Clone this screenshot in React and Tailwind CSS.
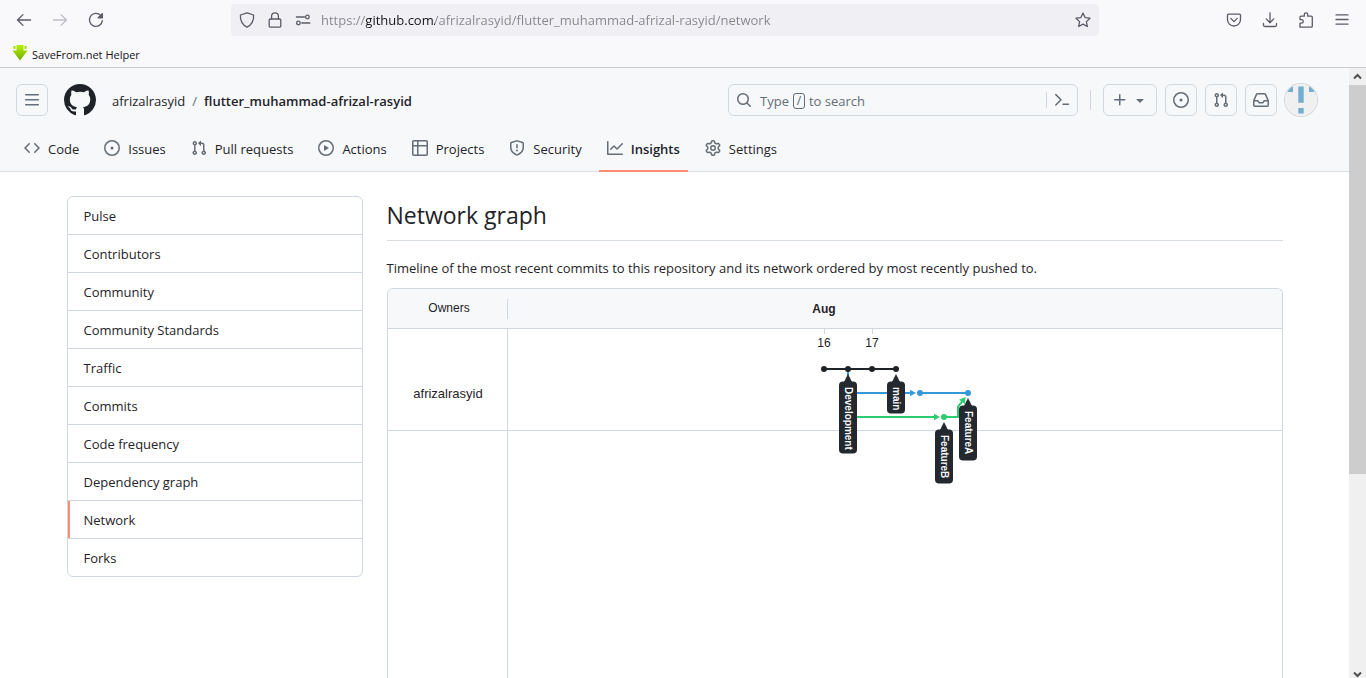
const ICONS = {
  code: "m11.28 3.22 4.25 4.25a.75.75 0 0 1 0 1.06l-4.25 4.25a.749.749 0 0 1-1.275-.326.749.749 0 0 1 .215-.734L13.94 8l-3.72-3.72a.749.749 0 0 1 .326-1.275.749.749 0 0 1 .734.215Zm-6.56 0a.751.751 0 0 1 1.042.018.751.751 0 0 1 .018 1.042L2.06 8l3.72 3.72a.749.749 0 0 1-.326 1.275.749.749 0 0 1-.734-.215L.47 8.53a.75.75 0 0 1 0-1.06Z",
  issue: "M8 9.5a1.5 1.5 0 1 0 0-3 1.5 1.5 0 0 0 0 3ZM8 0a8 8 0 1 1 0 16A8 8 0 0 1 8 0ZM1.5 8a6.5 6.5 0 1 0 13 0 6.5 6.5 0 0 0-13 0Z",
  pull: "M1.5 3.25a2.25 2.25 0 1 1 3 2.122v5.256a2.251 2.251 0 1 1-1.5 0V5.372A2.25 2.25 0 0 1 1.5 3.25Zm5.677-.177L9.573.677A.25.25 0 0 1 10 .854V2.5h1A2.5 2.5 0 0 1 13.5 5v5.628a2.251 2.251 0 1 1-1.5 0V5a1 1 0 0 0-1-1h-1v1.646a.25.25 0 0 1-.427.177L7.177 3.427a.25.25 0 0 1 0-.354ZM3.75 2.5a.75.75 0 1 0 0 1.5.75.75 0 0 0 0-1.5Zm0 9.5a.75.75 0 1 0 0 1.5.75.75 0 0 0 0-1.5Zm8.25.75a.75.75 0 1 0 1.5 0 .75.75 0 0 0-1.5 0Z",
  play: "M8 0a8 8 0 1 1 0 16A8 8 0 0 1 8 0ZM1.5 8a6.5 6.5 0 1 0 13 0 6.5 6.5 0 0 0-13 0Zm4.879-2.773 4.264 2.559a.25.25 0 0 1 0 .428l-4.264 2.559A.25.25 0 0 1 6 10.559V5.442a.25.25 0 0 1 .379-.215Z",
  table: "M0 1.75C0 .784.784 0 1.75 0h12.5C15.216 0 16 .784 16 1.75v12.5A1.75 1.75 0 0 1 14.25 16H1.75A1.75 1.75 0 0 1 0 14.25ZM6.5 6.5v8h7.75a.25.25 0 0 0 .25-.25V6.5Zm8-1.5V1.75a.25.25 0 0 0-.25-.25H6.5V5Zm-13 1.5v7.75c0 .138.112.25.25.25H5v-8ZM5 5V1.5H1.75a.25.25 0 0 0-.25.25V5Z",
  shield: "M7.467.133a1.748 1.748 0 0 1 1.066 0l5.25 1.68A1.75 1.75 0 0 1 15 3.48V7c0 1.566-.32 3.182-1.303 4.682-.983 1.498-2.585 2.813-5.032 3.855a1.697 1.697 0 0 1-1.33 0c-2.447-1.042-4.049-2.357-5.032-3.855C1.32 10.182 1 8.566 1 7V3.48a1.75 1.75 0 0 1 1.217-1.667Zm.61 1.429a.25.25 0 0 0-.153 0l-5.25 1.68a.25.25 0 0 0-.174.238V7c0 1.358.275 2.666 1.057 3.86.784 1.194 2.121 2.34 4.366 3.297a.196.196 0 0 0 .154 0c2.245-.956 3.582-2.104 4.366-3.298C13.225 9.666 13.5 8.36 13.5 7V3.48a.251.251 0 0 0-.174-.237l-5.25-1.68ZM8.75 4.75v3a.75.75 0 0 1-1.5 0v-3a.75.75 0 0 1 1.5 0ZM9 10.5a1 1 0 1 1-2 0 1 1 0 0 1 2 0Z",
  graph: "M1.5 1.75V13.5h13.75a.75.75 0 0 1 0 1.5H.75a.75.75 0 0 1-.75-.75V1.75a.75.75 0 0 1 1.5 0Zm14.28 2.53-5.25 5.25a.75.75 0 0 1-1.06 0L7 7.06 4.28 9.78a.751.751 0 0 1-1.042-.018.751.751 0 0 1-.018-1.042l3.25-3.25a.75.75 0 0 1 1.06 0L10 7.94l4.72-4.72a.751.751 0 0 1 1.042.018.751.751 0 0 1 .018 1.042Z",
  gear: "M8 0a8.2 8.2 0 0 1 .701.031C9.444.095 9.99.645 10.16 1.29l.288 1.107c.018.066.079.158.212.224.231.114.454.243.668.386.123.082.233.09.299.071l1.103-.303c.644-.176 1.392.021 1.82.63.27.385.506.792.704 1.218.315.675.111 1.422-.364 1.891l-.814.806c-.049.048-.098.147-.088.294.016.257.016.515 0 .772-.01.147.038.246.088.294l.814.806c.475.469.679 1.216.364 1.891a7.977 7.977 0 0 1-.704 1.217c-.428.61-1.176.807-1.82.63l-1.102-.302c-.067-.019-.177-.011-.3.071a5.909 5.909 0 0 1-.668.386c-.133.066-.194.158-.211.224l-.29 1.106c-.168.646-.715 1.196-1.458 1.26a8.006 8.006 0 0 1-1.402 0c-.743-.064-1.289-.614-1.458-1.26l-.289-1.106c-.018-.066-.079-.158-.212-.224a5.738 5.738 0 0 1-.668-.386c-.123-.082-.233-.09-.299-.071l-1.103.303c-.644.176-1.392-.021-1.82-.63a8.12 8.12 0 0 1-.704-1.218c-.315-.675-.111-1.422.363-1.891l.815-.806c.05-.048.098-.147.088-.294a6.214 6.214 0 0 1 0-.772c.01-.147-.038-.246-.088-.294l-.815-.806C.635 6.045.431 5.298.746 4.623a7.92 7.92 0 0 1 .704-1.217c.428-.61 1.176-.807 1.82-.63l1.102.302c.067.019.177.011.3-.071.214-.143.437-.272.668-.386.133-.066.194-.158.211-.224l.29-1.106C6.009.645 6.556.095 7.299.03 7.53.01 7.764 0 8 0Zm-.571 1.525c-.036.003-.108.036-.137.146l-.289 1.105c-.147.561-.549.967-.998 1.189-.173.086-.34.183-.5.29-.417.278-.97.423-1.529.27l-1.103-.303c-.109-.03-.175.016-.195.045-.22.312-.412.644-.573.99-.014.031-.021.11.059.19l.815.806c.411.406.562.957.53 1.456a4.709 4.709 0 0 0 0 .582c.032.499-.119 1.05-.53 1.456l-.815.806c-.081.08-.073.159-.059.19.162.346.353.677.573.989.02.03.085.076.195.046l1.102-.303c.56-.153 1.113-.008 1.53.27.161.107.328.204.501.29.447.222.85.629.997 1.189l.289 1.105c.029.109.101.143.137.146a6.6 6.6 0 0 0 1.142 0c.036-.003.108-.036.137-.146l.289-1.105c.147-.561.549-.967.998-1.189.173-.086.34-.183.5-.29.417-.278.97-.423 1.529-.27l1.103.303c.109.029.175-.016.195-.045.22-.313.411-.644.573-.99.014-.031.021-.11-.059-.19l-.815-.806c-.411-.406-.562-.957-.53-1.456a4.709 4.709 0 0 0 0-.582c-.032-.499.119-1.05.53-1.456l.815-.806c.081-.08.073-.159.059-.19a6.464 6.464 0 0 0-.573-.989c-.02-.03-.085-.076-.195-.046l-1.102.303c-.56.153-1.113.008-1.53-.27a4.44 4.44 0 0 0-.501-.29c-.447-.222-.85-.629-.997-1.189l-.289-1.105c-.029-.11-.101-.143-.137-.146a6.6 6.6 0 0 0-1.142 0ZM11 8a3 3 0 1 1-6 0 3 3 0 0 1 6 0ZM9.5 8a1.5 1.5 0 1 0-3.001.001A1.5 1.5 0 0 0 9.5 8Z",
  inbox: "M2.8 2.06A1.75 1.75 0 0 1 4.41 1h7.18c.7 0 1.333.417 1.61 1.06l2.74 6.395c.04.093.06.194.06.295v4.5A1.75 1.75 0 0 1 14.25 15H1.75A1.75 1.75 0 0 1 0 13.25v-4.5c0-.101.02-.202.06-.295Zm1.61.44a.25.25 0 0 0-.23.152L1.887 8H4.75a.75.75 0 0 1 .6.3L6.625 10h2.75l1.275-1.7a.75.75 0 0 1 .6-.3h2.863L11.82 2.652a.25.25 0 0 0-.23-.152Zm10.09 7h-2.875l-1.275 1.7a.75.75 0 0 1-.6.3h-3.5a.75.75 0 0 1-.6-.3L4.375 9.5H1.5v3.75c0 .138.112.25.25.25h12.5a.25.25 0 0 0 .25-.25Z",
  plus: "M7.75 2a.75.75 0 0 1 .75.75V7h4.25a.75.75 0 0 1 0 1.5H8.5v4.25a.75.75 0 0 1-1.5 0V8.5H2.75a.75.75 0 0 1 0-1.5H7V2.75A.75.75 0 0 1 7.75 2Z",
  triangle: "m4.427 7.427 3.396 3.396a.25.25 0 0 0 .354 0l3.396-3.396A.25.25 0 0 0 11.396 7H4.604a.25.25 0 0 0-.177.427Z",
  search: "M10.68 11.74a6 6 0 0 1-7.922-8.982 6 6 0 0 1 8.982 7.922l3.04 3.04a.749.749 0 0 1-.326 1.275.749.749 0 0 1-.734-.215ZM11.5 7a4.499 4.499 0 1 0-8.997 0A4.499 4.499 0 0 0 11.5 7Z",
  bars: "M1 2.75A.75.75 0 0 1 1.75 2h12.5a.75.75 0 0 1 0 1.5H1.75A.75.75 0 0 1 1 2.75Zm0 5A.75.75 0 0 1 1.75 7h12.5a.75.75 0 0 1 0 1.5H1.75A.75.75 0 0 1 1 7.75ZM1.75 12h12.5a.75.75 0 0 1 0 1.5H1.75a.75.75 0 0 1 0-1.5Z",
  github: "M8 0c4.42 0 8 3.58 8 8a8.013 8.013 0 0 1-5.45 7.59c-.4.08-.55-.17-.55-.38 0-.27.01-1.13.01-2.2 0-.75-.25-1.23-.54-1.48 1.78-.2 3.65-.88 3.65-3.95 0-.88-.31-1.59-.82-2.15.08-.2.36-1.02-.08-2.12 0 0-.67-.22-2.2.82-.64-.18-1.32-.27-2-.27-.68 0-1.36.09-2 .27-1.53-1.03-2.2-.82-2.2-.82-.44 1.1-.16 1.92-.08 2.12-.51.56-.82 1.28-.82 2.15 0 3.06 1.86 3.75 3.64 3.95-.23.2-.44.55-.51 1.07-.46.21-1.61.55-2.33-.66-.15-.24-.6-.83-1.23-.82-.67.01-.27.38.01.53.34.19.73.9.82 1.13.16.45.68 1.31 2.69.94 0 .67.01 1.3.01 1.49 0 .21-.15.45-.55.38A7.995 7.995 0 0 1 0 8c0-4.42 3.58-8 8-8Z",
};

function Octicon({ name, className = "size-4" }) {
  return (
    <svg viewBox="0 0 16 16" className={`${className} shrink-0 fill-current`} aria-hidden="true">
      <path d={ICONS[name]} />
    </svg>
  );
}

function LineIcon({ children }) {
  return (
    <svg
      viewBox="0 0 16 16"
      className="size-4 shrink-0 fill-none stroke-current"
      strokeWidth="1.3"
      strokeLinecap="round"
      strokeLinejoin="round"
      aria-hidden="true"
    >
      {children}
    </svg>
  );
}

function ToolButton({ label, className = "", children }) {
  return (
    <button type="button" aria-label={label} className={`flex size-9 items-center justify-center ${className}`}>
      {children}
    </button>
  );
}

function BrowserChrome() {
  return (
    <div className="shrink-0 border-b border-[#cccccf] bg-[#f9f9fb] text-[#5b5b66]">
      <div className="flex h-[39px] items-center">
        <div className="flex w-[231px] shrink-0 pl-[6px]">
          <ToolButton label="Back">
            <LineIcon><path d="M14.6 8H1.7M7 2.6 1.5 8 7 13.4" /></LineIcon>
          </ToolButton>
          <ToolButton label="Forward" className="text-[#bdbdc3]">
            <LineIcon><path d="M1.4 8h12.9M9 2.6 14.5 8 9 13.4" /></LineIcon>
          </ToolButton>
          <ToolButton label="Reload">
            <LineIcon>
              <path d="M12.6 3.4A6.5 6.5 0 1 0 14.4 8.6" />
              <path d="M14.4 1.6v4.2h-4.2Z" fill="currentColor" />
            </LineIcon>
          </ToolButton>
        </div>
        <div className="flex h-8 min-w-0 flex-1 items-center rounded bg-[#f0f0f4] px-2">
          <span className="flex gap-3">
            <LineIcon><path d="M8 .8 14.6 3c.3 5.2-1.6 9.6-6.6 12.2C3 12.6 1.1 8.2 1.4 3Z" /></LineIcon>
            <LineIcon>
              <rect x="2.2" y="7" width="11.6" height="8.2" rx="1.2" />
              <path d="M4.6 7V4.2a3.400 3.400 0 0 1 6.800 0V7" />
            </LineIcon>
            <LineIcon>
              <path d="M1.4 5h8M6.800 11h8" />
              <circle cx="12.4" cy="5" r="1.8" />
              <circle cx="3.4" cy="11" r="1.8" />
            </LineIcon>
          </span>
          <input
            type="text"
            aria-label="Address"
            defaultValue="https://github.com/afrizalrasyid/flutter_muhammad-afrizal-rasyid/network"
            className="ml-[10px] min-w-0 flex-1 bg-[linear-gradient(90deg,#85858c_45px,#15141a_45px,#15141a_114px,#85858c_114px)] bg-clip-text pt-0.5 text-[13px] text-transparent outline-none"
          />
          <button type="button" aria-label="Bookmark this page">
            <LineIcon>
              <path d="m8 1.1 2.1 4.5 4.9.6-3.6 3.4.9 4.9L8 12.1l-4.3 2.4.9-4.9L1 6.2l4.9-.6Z" />
            </LineIcon>
          </button>
        </div>
        <div className="flex w-[267px] shrink-0 justify-end pr-[6px]">
          <ToolButton label="Save to Pocket">
            <LineIcon>
              <path d="M2.500 2.200h11a1 1 0 0 1 1 1v4.300a6.500 6.500 0 0 1-13 0V3.200a1 1 0 0 1 1-1Z" />
              <path d="M4.800 6.400 8 9.600l3.200-3.200" />
            </LineIcon>
          </ToolButton>
          <ToolButton label="Downloads">
            <LineIcon><path d="M8 .8v9.700M4.200 6.900 8 10.700l3.800-3.800M1.500 11.500v1.500a1.500 1.500 0 0 0 1.500 1.500h10a1.500 1.500 0 0 0 1.500-1.500v-1.500" /></LineIcon>
          </ToolButton>
          <ToolButton label="Extensions">
            <LineIcon>
              <path d="M2 15.200V11.200h1.500a1.700 1.700 0 0 0 0-3.600H2V5.200a1 1 0 0 1 1-1h3.300V2.600a1.700 1.700 0 0 1 3.400 0v1.600h3.600a1 1 0 0 1 1 1v9a1 1 0 0 1-1 1Z" />
            </LineIcon>
          </ToolButton>
          <ToolButton label="Open application menu">
            <LineIcon><path d="M2 2.900h12M2 7.500h12M2 12.100h12" /></LineIcon>
          </ToolButton>
        </div>
      </div>
      <div className="flex h-7 items-center px-3">
        <a href="#savefrom" className="flex items-center text-[11px] text-[#15141a]">
          <svg viewBox="0 0 16 16" className="mr-1 size-4" aria-hidden="true">
            <defs>
              <linearGradient id="lime" x1="0" y1="0" x2="0" y2="1">
                <stop offset="0" stopColor="#b6f000" />
                <stop offset="1" stopColor="#6fae00" />
              </linearGradient>
            </defs>
            <path d="M4.500 0h7v5.500h4L8 15.500.5 5.500h4Z" fill="url(#lime)" />
            <path d="M1.500 1h2v3h-2ZM12.500 1h2v3h-2Z" fill="#a5e000" />
          </svg>
          <span className="pt-0.5">SaveFrom.net Helper</span>
        </a>
      </div>
    </div>
  );
}

function HeaderButton({ label, className = "w-8", children }) {
  return (
    <button
      type="button"
      aria-label={label}
      className={`flex h-8 shrink-0 items-center justify-center rounded-md border border-[#d0d7de] text-[#656d76] ${className}`}
    >
      {children}
    </button>
  );
}

const TABS = [
  ["Code", "code"],
  ["Issues", "issue"],
  ["Pull requests", "pull"],
  ["Actions", "play"],
  ["Projects", "table"],
  ["Security", "shield"],
  ["Insights", "graph"],
  ["Settings", "gear"],
];

function RepoHeader() {
  return (
    <header className="border-b border-[#d8dee4] bg-[#f6f8fa]">
      <div className="flex items-center pt-4 pr-8 pl-4">
        <HeaderButton label="Open menu"><Octicon name="bars" /></HeaderButton>
        <a href="#home" aria-label="Homepage" className="ml-4"><Octicon name="github" className="size-8" /></a>
        <div className="ml-4 flex flex-1 gap-[7px] pt-0.5 whitespace-nowrap">
          <a href="#owner">afrizalrasyid</a>
          <span className="text-[#656d76]">/</span>
          <a href="#repo" className="font-semibold">flutter_muhammad-afrizal-rasyid</a>
        </div>
        <div className="flex h-8 w-[350px] items-center rounded-md border border-[#d0d7de] text-[#656d76]">
          <button type="button" className="flex flex-1 items-center pl-[7px]">
            <Octicon name="search" />
            <span className="ml-2 flex items-center pt-0.5">
              Type
              <kbd className="mx-1 flex h-4 w-3 items-center justify-center rounded-[3px] border border-[#656d76] font-sans text-xs">/</kbd>
              to search
            </span>
          </button>
          <button type="button" aria-label="Command palette" className="flex h-4 w-[31px] items-center justify-center border-l border-[#d0d7de]">
            <svg viewBox="0 0 16 16" className="size-4 fill-none stroke-current" strokeWidth="1.5" strokeLinecap="round" strokeLinejoin="round" aria-hidden="true">
              <path d="M1.800 2.600 7 7.800 1.800 13M9 12.200h5.500" />
            </svg>
          </button>
        </div>
        <div className="mx-3 h-5 w-px bg-[#d0d7de]" />
        <div className="flex items-center gap-2">
          <HeaderButton label="Create new" className="w-[54px] gap-1"><Octicon name="plus" /><Octicon name="triangle" /></HeaderButton>
          <HeaderButton label="Issues"><Octicon name="issue" /></HeaderButton>
          <HeaderButton label="Pull requests"><Octicon name="pull" /></HeaderButton>
          <HeaderButton label="Notifications"><Octicon name="inbox" /></HeaderButton>
          <button type="button" aria-label="Account" className="overflow-hidden rounded-full ring-1 ring-[#d0d7de]">
            <svg viewBox="0 0 32 32" className="block size-8" aria-hidden="true">
              <path d="M0 0h32v32H0Z" fill="#f0f0f0" />
              <path d="M2.500 2.500H8V8H2.500ZM13.300 2.500h5.400v16.200h-5.400ZM24 2.500h5.500V8H24ZM13.300 24h5.400v5.400h-5.400Z" fill="#73adcf" />
            </svg>
          </button>
        </div>
      </div>
      <nav aria-label="Repository" className="flex h-[55px] gap-[9px] px-4 pt-[10px]">
        {TABS.map(([label, icon]) => {
          const active = label === "Insights";
          return (
            <a
              key={label}
              href={`#${icon}`}
              aria-current={active ? "page" : undefined}
              className={`-mb-px flex items-center gap-2 border-b-2 px-2 whitespace-nowrap ${active ? "border-[#fd8c73] font-semibold" : "border-transparent"}`}
            >
              <span className="text-[#656d76]"><Octicon name={icon} /></span>
              <span className="pt-0.5">{label}</span>
            </a>
          );
        })}
      </nav>
    </header>
  );
}

const MENU = ["Pulse", "Contributors", "Community", "Community Standards", "Traffic", "Commits", "Code frequency", "Dependency graph", "Network", "Forks"];

function SideMenu() {
  return (
    <nav aria-label="Insights" className="w-[296px] shrink-0 self-start overflow-hidden rounded-md border border-[#d0d7de]">
      {MENU.map((item) => (
        <a
          key={item}
          href={`#${item}`}
          aria-current={item === "Network" ? "page" : undefined}
          className={`flex h-[38px] items-center border-b border-[#d0d7de] px-4 pt-0.5 last:h-[37px] last:border-b-0 ${item === "Network" ? "shadow-[inset_2px_0_0_#fd8c73]" : ""}`}
        >
          {item}
        </a>
      ))}
    </nav>
  );
}

const BRANCHES = [
  { name: "Development", x: 340, y: 85, length: 72 },
  { name: "main", x: 388, y: 85, length: 32 },
  { name: "FeatureB", x: 436, y: 133, length: 54 },
  { name: "FeatureA", x: 460, y: 109, length: 55 },
];

function BranchGraph() {
  return (
    <svg
      viewBox="0 0 520 220"
      className="absolute top-0 left-[120px] h-[220px] w-[520px] font-['Liberation_Sans',Arial,sans-serif] text-xs"
      role="img"
      aria-label="Commit timeline"
    >
      <g fill="#1f2328" textAnchor="middle">
        <text x="316" y="24" fontWeight="700">Aug</text>
        <text x="316" y="58">16</text>
        <text x="364" y="58">17</text>
      </g>
      <path d="M316.500 40v5M364.500 40v5" stroke="#d0d7de" />
      <g fill="none" strokeWidth="2">
        <path d="M340 104v24h87M436 128h14v-10.500l5-6" stroke="#2ecc71" />
        <path d="M340 80v24h63M412 104h48" stroke="#3498db" />
        <path d="M316 80h72" stroke="#1f2328" />
      </g>
      <path d="M402 100.700 408 104l-6 3.300Z" fill="#3498db" />
      <path d="m426 124.700 6 3.300-6 3.300ZM457.500 108l-.5 7-6-4.200Z" fill="#2ecc71" />
      <g fill="#1f2328">
        {[316, 340, 364, 388].map((x) => <circle key={x} cx={x} cy="80" r="3" />)}
      </g>
      <g fill="#3498db">
        <circle cx="412" cy="104" r="3" />
        <circle cx="460" cy="104" r="3" />
      </g>
      <circle cx="436" cy="128" r="3" fill="#2ecc71" />
      {BRANCHES.map(({ name, x, y, length }) => (
        <g key={name} transform={`translate(${x} ${y})`}>
          <path d="M0 0 4 8h-8Z" fill="#24292f" />
          <rect x="-9" y="7.5" width="18" height={length} rx="4" fill="#24292f" />
          <text transform="rotate(90)" x="13" y="3" fontSize="10" fontWeight="700" fill="#f6f8fa">{name}</text>
        </g>
      ))}
    </svg>
  );
}

function NetworkGraph() {
  return (
    <div className="relative mt-[9px] flex flex-1 flex-col overflow-hidden rounded-t-md border border-b-0 border-[#d0d7de] font-['Liberation_Sans',Arial,sans-serif]">
      <div className="flex h-10 shrink-0 items-center border-b border-[#d0d7de] bg-[#f6f8fa] text-xs">
        <div className="flex h-5 w-[120px] items-center justify-center border-r border-[#d0d7de] pb-0.5 pl-1">
          Owners
        </div>
      </div>
      <div className="flex h-[102px] shrink-0 border-b border-[#d0d7de] text-[13px]">
        <div className="flex w-[120px] items-center justify-center border-r border-[#d0d7de] pt-7 pl-0.5">
          <a href="#owner">afrizalrasyid</a>
        </div>
      </div>
      <div className="w-[120px] flex-1 border-r border-[#d0d7de]" />
      <BranchGraph />
    </div>
  );
}

function Scrollbar() {
  return (
    <div aria-hidden="true" className="flex w-[17px] shrink-0 flex-col bg-[#f0f0f0] text-[#505050]">
      <svg viewBox="0 0 17 17" className="size-[17px] fill-none stroke-current" strokeWidth="2"><path d="m5 10.500 3.500-3.500 3.500 3.500" /></svg>
      <div className="flex-[389] bg-[#cdcdcd]" />
      <div className="flex-[187]" />
      <svg viewBox="0 0 17 17" className="size-[17px] fill-none stroke-current" strokeWidth="2"><path d="m5 11.500 3.500 3.500 3.500-3.500" /></svg>
    </div>
  );
}

export default function App() {
  return (
    <div className="flex h-screen flex-col overflow-hidden bg-white font-['Segoe_UI','Open_Sans',sans-serif] text-[13px] leading-[21px] text-[#1f2328]">
      <BrowserChrome />
      <div className="flex min-h-0 flex-1">
        <div className="flex min-w-0 flex-1 flex-col overflow-hidden">
          <RepoHeader />
          <div className="mx-auto flex w-full max-w-[1280px] flex-1 gap-6 px-8 pt-6">
            <SideMenu />
            <main className="flex min-w-0 flex-1 flex-col">
              <h1 className="mb-[17px] border-b border-[#d8dee4] pt-px pb-[7px] text-[23px] leading-9">Network graph</h1>
              <p>Timeline of the most recent commits to this repository and its network ordered by most recently pushed to.</p>
              <NetworkGraph />
            </main>
          </div>
        </div>
        <Scrollbar />
      </div>
    </div>
  );
}
